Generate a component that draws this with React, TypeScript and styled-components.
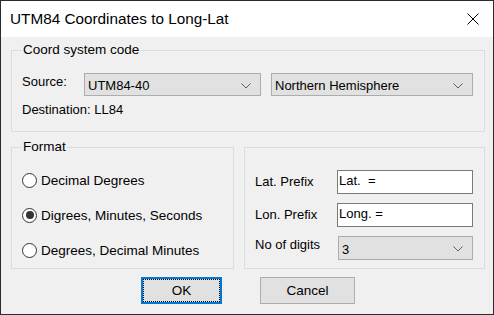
import styled, { createGlobalStyle } from 'styled-components'

const GlobalStyle = createGlobalStyle`
  html, body {
    margin: 0;
    padding: 0;
    background: #f0f0f0;
  }
`

const Window = styled.div`
  width: 494px;
  height: 315px;
  box-sizing: border-box;
  border: 1px solid #2b2b2b;
  display: flex;
  flex-direction: column;
  font-family: 'Liberation Sans', Arial, sans-serif;
  font-size: 13px;
  color: #000;
  background: #f0f0f0;
  overflow: hidden;
`

const TitleBar = styled.div`
  height: 36px;
  flex-shrink: 0;
  background: #fff;
  display: flex;
  align-items: center;
  justify-content: space-between;
  padding: 0 14px 0 9px;
  font-size: 15.3px;
`

const CloseIcon = () => (
  <svg width="12" height="12" viewBox="0 0 12 12">
    <path d="M0.5 0.5 L11.5 11.5 M11.5 0.5 L0.5 11.5" stroke="#000" strokeWidth="1" fill="none" />
  </svg>
)

const Body = styled.div`
  flex: 1;
  display: flex;
  flex-direction: column;
  padding: 5px 8px 0 10px;
`

const Group = styled.fieldset<{ $h?: number }>`
  margin: 0;
  padding: 0 10px 13px 10px;
  border: 1px solid #dcdcdc;
  min-width: 0;
  box-sizing: border-box;
  ${(p) => (p.$h ? `height: ${p.$h}px;` : '')}
`

const Legend = styled.legend`
  padding: 0 1px;
  line-height: 16px;
  font-size: 13.5px;
`

const SourceRow = styled.div`
  display: flex;
  margin-top: 15px;
`

const Label = styled.div<{ $w?: number }>`
  width: ${(p) => p.$w ?? 62}px;
  flex-shrink: 0;
  line-height: 18px;
`

const Combo = styled.div<{ $w?: number; $h?: number }>`
  width: ${(p) => (p.$w ? `${p.$w}px` : 'auto')};
  height: ${(p) => p.$h ?? 23}px;
  box-sizing: border-box;
  background: #e1e1e1;
  border: 1px solid #adadad;
  display: flex;
  align-items: center;
  justify-content: space-between;
  padding: 2px 9px 0 3px;
  & + & {
    margin-left: 10px;
  }
`

const Chevron = () => (
  <svg width="10" height="6" viewBox="0 0 10 6">
    <path d="M0.5 0.5 L5 5 L9.5 0.5" stroke="#606060" strokeWidth="1" fill="none" />
  </svg>
)

const Destination = styled.div`
  margin-top: 6px;
  line-height: 16px;
`

const BottomRow = styled.div`
  display: flex;
  margin-top: 7px;
  gap: 10px;
`

const FormatGroup = styled(Group)`
  width: 223px;
  flex-shrink: 0;
`

const Panel = styled.div`
  flex: 1;
  margin-top: 8px;
  height: 122px;
  box-sizing: border-box;
  border: 1px solid #dcdcdc;
  padding: 22px 11px 0 10px;
  display: grid;
  grid-template-columns: 82px 1fr;
  grid-template-rows: 23px 23px 24px;
  row-gap: 10px;
  align-items: center;
`

const RadioList = styled.div`
  display: flex;
  flex-direction: column;
  gap: 15px;
  margin-top: 15px;
`

const RadioRow = styled.div`
  display: flex;
  align-items: center;
  height: 20px;
  font-size: 13.5px;
  gap: 4px;
`

const RadioCircle = styled.span<{ $on?: boolean }>`
  width: 15px;
  height: 15px;
  box-sizing: border-box;
  border-radius: 50%;
  border: 1px solid #333;
  background: #fff;
  display: flex;
  align-items: center;
  justify-content: center;
  &::after {
    content: '';
    width: 8px;
    height: 8px;
    border-radius: 50%;
    background: ${(p) => (p.$on ? '#333' : 'transparent')};
  }
`

const FieldLabel = styled.div<{ $top?: boolean }>`
  line-height: 16px;
  align-self: ${(p) => (p.$top ? 'start' : 'center')};
  margin-top: ${(p) => (p.$top ? 1 : 0)}px;
`

const TextBox = styled.div`
  height: 24px;
  box-sizing: border-box;
  background: #fff;
  border: 1px solid #7a7a7a;
  padding: 2px 0 0 1px;
  line-height: 16px;
`

const DigitsCombo = styled(Combo)`
  margin-left: 1px;
`

const ButtonRow = styled.div`
  display: flex;
  justify-content: center;
  gap: 38px;
  margin-top: 8px;
`

const Button = styled.div<{ $w: number; $default?: boolean }>`
  width: ${(p) => p.$w}px;
  height: 27px;
  box-sizing: border-box;
  background: #e1e1e1;
  border: ${(p) => (p.$default ? '2px solid #0078d7' : '1px solid #adadad')};
  display: flex;
  align-items: center;
  justify-content: center;
  font-size: 13.5px;
  ${(p) => (p.$default ? 'outline: 1px dotted #000; outline-offset: -3px;' : '')}
`

export default function App() {
  return (
    <>
      <GlobalStyle />
      <Window>
        <TitleBar>
          <span>UTM84 Coordinates to Long-Lat</span>
          <CloseIcon />
        </TitleBar>
        <Body>
          <Group>
            <Legend>Coord system code</Legend>
            <SourceRow>
              <Label>Source:</Label>
              <Combo $w={177}>
                <span>UTM84-40</span>
                <Chevron />
              </Combo>
              <Combo $w={202}>
                <span>Northern Hemisphere</span>
                <Chevron />
              </Combo>
            </SourceRow>
            <Destination>Destination: LL84</Destination>
          </Group>
          <BottomRow>
            <FormatGroup $h={130}>
              <Legend>Format</Legend>
              <RadioList>
                <RadioRow>
                  <RadioCircle />
                  Decimal Degrees
                </RadioRow>
                <RadioRow>
                  <RadioCircle $on />
                  Digrees, Minutes, Seconds
                </RadioRow>
                <RadioRow>
                  <RadioCircle />
                  Degrees, Decimal Minutes
                </RadioRow>
              </RadioList>
            </FormatGroup>
            <Panel>
              <FieldLabel>Lat. Prefix</FieldLabel>
              <TextBox>Lat.&nbsp; =</TextBox>
              <FieldLabel>Lon. Prefix</FieldLabel>
              <TextBox>Long. =</TextBox>
              <FieldLabel $top>No of digits</FieldLabel>
              <DigitsCombo $h={24}>
                <span>3</span>
                <Chevron />
              </DigitsCombo>
            </Panel>
          </BottomRow>
          <ButtonRow>
            <Button $w={81} $default>OK</Button>
            <Button $w={95}>Cancel</Button>
          </ButtonRow>
        </Body>
      </Window>
    </>
  )
}
